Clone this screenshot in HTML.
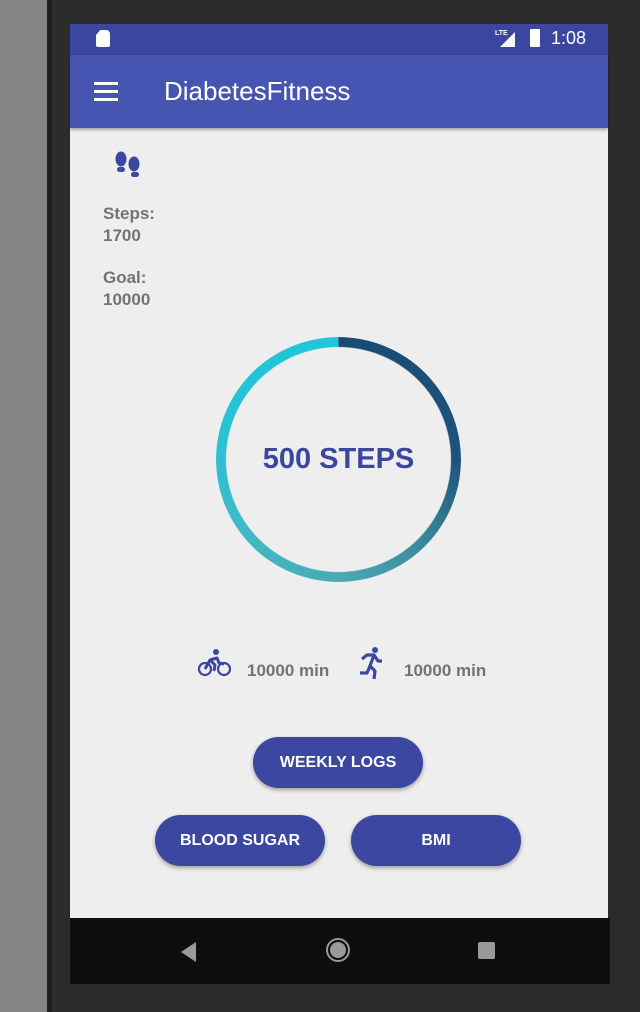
<!DOCTYPE html>
<html><head><style>
*{margin:0;padding:0;box-sizing:border-box}
body{width:640px;height:1012px;overflow:hidden;background:#2c2c2c;font-family:"Liberation Sans",sans-serif;position:relative}
.side{position:absolute;left:0;top:0;width:47px;height:1012px;background:#858585}
.side2{position:absolute;left:47px;top:0;width:5px;height:1012px;background:#1e1e1e}
.screen{position:absolute;left:70px;top:24px;width:538px;height:894px;background:#eeeeee}
.status{position:absolute;left:0;top:0;width:538px;height:31px;background:#3a46a0;color:#fff}
.appbar{position:absolute;left:0;top:31px;width:538px;height:73px;background:#4655b1;box-shadow:0 2px 3px rgba(0,0,0,.3)}
.nav{position:absolute;left:70px;top:918px;width:540px;height:66px;background:#0e0e0e}
.t{position:absolute;color:#737373;font-weight:bold;font-size:17px;line-height:22px}
.btn{position:absolute;height:51px;border-radius:26px;background:#3b47a0;color:#fff;font-size:16px;font-weight:bold;display:flex;align-items:center;justify-content:center;box-shadow:0 2px 4px rgba(0,0,0,.35)}
.ring{position:absolute;left:216px;top:337px;width:245px;height:245px;border-radius:50%;background:conic-gradient(#1a4a72 0deg,#1d5479 90deg,#3c8e9f 140deg,#4aaab4 180deg,#3ebbc8 240deg,#22c4d6 300deg,#22c6da 360deg);-webkit-mask:radial-gradient(circle,transparent 112px,#000 113px);mask:radial-gradient(circle,transparent 112px,#000 113px)}
</style></head><body>
<div class="side"></div><div class="side2"></div>
<div class="screen">
 <div class="status">
  <div style="position:absolute;left:26px;top:6px;width:14px;height:17px;background:#fff;border-radius:2px 4px 2px 2px;clip-path:polygon(30% 0,100% 0,100% 100%,0 100%,0 30%)"></div>
  <div style="position:absolute;left:425px;top:6px;font-size:7px;font-weight:bold">LTE</div>
  <div style="position:absolute;left:430px;top:8px;width:0;height:0;border-left:15px solid transparent;border-bottom:15px solid #fff;opacity:.95"></div>
  <div style="position:absolute;left:460px;top:5px;width:10px;height:18px;background:#fff;border-radius:1px"></div>
  <div style="position:absolute;left:481px;top:4px;font-size:18px">1:08</div>
 </div>
 <div class="appbar">
  <div style="position:absolute;left:24px;top:27px;width:24px;height:3px;background:#fff;box-shadow:0 8px 0 #fff,0 16px 0 #fff"></div>
  <div style="position:absolute;left:94px;top:21px;color:#fff;font-size:26px">DiabetesFitness</div>
 </div>
</div>
<svg style="position:absolute;left:112px;top:151px" width="32" height="30" viewBox="0 0 32 30"><g fill="#3b47a0"><ellipse cx="9" cy="8" rx="5.5" ry="7.5"/><rect x="5" y="16" width="8" height="5" rx="2.5"/><ellipse cx="22" cy="13" rx="5.5" ry="7.5"/><rect x="19" y="21" width="8" height="5" rx="2.5"/></g></svg>
<div class="t" style="left:103px;top:203px">Steps:<br>1700</div>
<div class="t" style="left:103px;top:267px">Goal:<br>10000</div>
<div class="ring"></div>
<div style="position:absolute;left:216px;top:443px;width:245px;text-align:center;color:#3a47a0;font-size:29px;font-weight:bold">500 STEPS</div>
<svg style="position:absolute;left:197px;top:648px" width="35" height="30" viewBox="0 0 35 30"><g fill="none" stroke="#3b47a0" stroke-width="2.2"><circle cx="8" cy="21" r="6"/><circle cx="27" cy="21" r="6"/></g><circle cx="19" cy="4" r="3" fill="#3b47a0"/><path d="M8 21 L13 12 L20 10 L22 15 L27 16 M13 12 L18 17 L17 23" fill="none" stroke="#3b47a0" stroke-width="3" stroke-linejoin="round"/></svg>
<div class="t" style="left:247px;top:660px">10000 min</div>
<svg style="position:absolute;left:358px;top:646px" width="26" height="34" viewBox="0 0 26 34"><circle cx="17" cy="4" r="3" fill="#3b47a0"/><path d="M4 13 L9 9 L16 9 L20 15 L24 15 M16 9 L12 20 L17 25 L16 33 M12 20 L9 27 L2 27" fill="none" stroke="#3b47a0" stroke-width="3.2" stroke-linejoin="round"/></svg>
<div class="t" style="left:404px;top:660px">10000 min</div>
<div class="btn" style="left:253px;top:737px;width:170px">WEEKLY LOGS</div>
<div class="btn" style="left:155px;top:815px;width:170px">BLOOD SUGAR</div>
<div class="btn" style="left:351px;top:815px;width:170px">BMI</div>
<div class="nav">
 <div style="position:absolute;left:111px;top:24px;width:0;height:0;border-top:10px solid transparent;border-bottom:10px solid transparent;border-right:15px solid #9a9a9a"></div>
 <div style="position:absolute;left:256px;top:20px;width:24px;height:24px;border-radius:50%;border:2px solid #9a9a9a;padding:2px"><div style="width:100%;height:100%;border-radius:50%;background:#9a9a9a"></div></div>
 <div style="position:absolute;left:408px;top:24px;width:17px;height:17px;background:#9a9a9a;border-radius:2px"></div>
</div>
</body></html>
